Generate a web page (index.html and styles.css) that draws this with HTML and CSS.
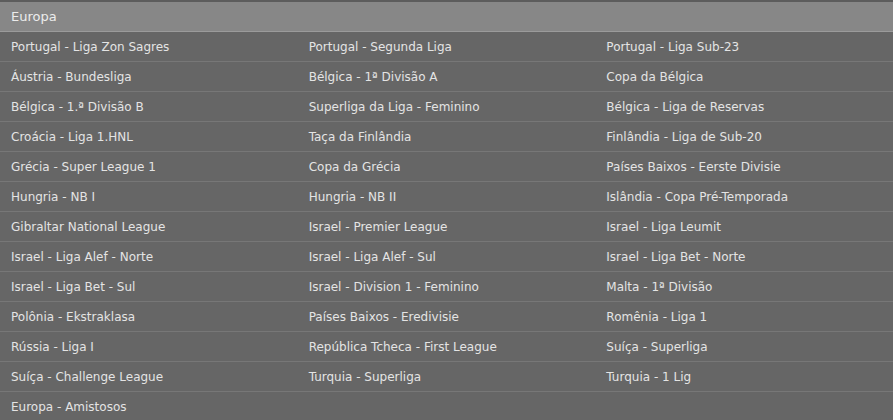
FILE: index.html
```html
<!DOCTYPE html>
<html lang="pt">
<head>
    <meta charset="UTF-8">
    <meta name="viewport" content="width=device-width, initial-scale=1.0">
    <title>Europa</title>
    <link rel="stylesheet" href="styles.css">
</head>
<body>
    <div class="region">
        <div class="region-title">Europa</div>
        <ul class="league-list">
            <li><a href="#">Portugal - Liga Zon Sagres</a></li>
            <li><a href="#">Portugal - Segunda Liga</a></li>
            <li><a href="#">Portugal - Liga Sub-23</a></li>
            <li><a href="#">Áustria - Bundesliga</a></li>
            <li><a href="#">Bélgica - 1ª Divisão A</a></li>
            <li><a href="#">Copa da Bélgica</a></li>
            <li><a href="#">Bélgica - 1.ª Divisão B</a></li>
            <li><a href="#">Superliga da Liga - Feminino</a></li>
            <li><a href="#">Bélgica - Liga de Reservas</a></li>
            <li><a href="#">Croácia - Liga 1.HNL</a></li>
            <li><a href="#">Taça da Finlândia</a></li>
            <li><a href="#">Finlândia - Liga de Sub-20</a></li>
            <li><a href="#">Grécia - Super League 1</a></li>
            <li><a href="#">Copa da Grécia</a></li>
            <li><a href="#">Países Baixos - Eerste Divisie</a></li>
            <li><a href="#">Hungria - NB I</a></li>
            <li><a href="#">Hungria - NB II</a></li>
            <li><a href="#">Islândia - Copa Pré-Temporada</a></li>
            <li><a href="#">Gibraltar National League</a></li>
            <li><a href="#">Israel - Premier League</a></li>
            <li><a href="#">Israel - Liga Leumit</a></li>
            <li><a href="#">Israel - Liga Alef - Norte</a></li>
            <li><a href="#">Israel - Liga Alef - Sul</a></li>
            <li><a href="#">Israel - Liga Bet - Norte</a></li>
            <li><a href="#">Israel - Liga Bet - Sul</a></li>
            <li><a href="#">Israel - Division 1 - Feminino</a></li>
            <li><a href="#">Malta - 1ª Divisão</a></li>
            <li><a href="#">Polônia - Ekstraklasa</a></li>
            <li><a href="#">Países Baixos - Eredivisie</a></li>
            <li><a href="#">Romênia - Liga 1</a></li>
            <li><a href="#">Rússia - Liga I</a></li>
            <li><a href="#">República Tcheca - First League</a></li>
            <li><a href="#">Suíça - Superliga</a></li>
            <li><a href="#">Suíça - Challenge League</a></li>
            <li><a href="#">Turquia - Superliga</a></li>
            <li><a href="#">Turquia - 1 Lig</a></li>
            <li><a href="#">Europa - Amistosos</a></li>
            <li class="empty"></li>
            <li class="empty"></li>
        </ul>
    </div>
</body>
</html>
```

FILE: styles.css
```css
body {
    margin: 0;
    background-color: #666666;
    font-family: "DejaVu Sans", sans-serif;
    font-size: 12px;
    color: #e4e4e4;
}
.region {
    border-top: 2px solid #5c5c5c;
}
.region-title {
    background-color: #878787;
    border-bottom: 1px solid #9b9b9b;
    height: 29px;
    line-height: 30px;
    padding-left: 11px;
    font-size: 13px;
    color: #ececec;
}
.league-list {
    list-style: none;
    margin: 0;
    padding: 0;
    display: grid;
    grid-template-columns: repeat(3, 1fr);
}
.league-list li {
    height: 29px;
    line-height: 30px;
    border-bottom: 1px solid #777777;
    padding-left: 11px;
    white-space: nowrap;
}
.league-list a {
    color: #e4e4e4;
    text-decoration: none;
}
```
